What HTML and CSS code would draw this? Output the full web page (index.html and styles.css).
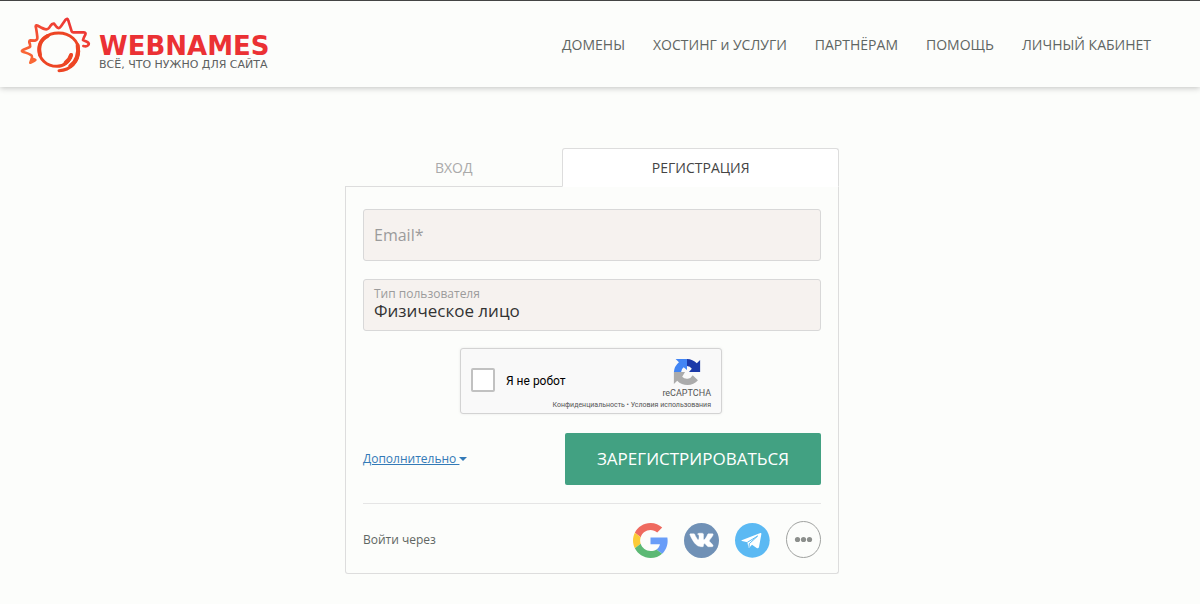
FILE: index.html
```
<!DOCTYPE html>
<html lang="ru">
<head>
  <meta charset="UTF-8" />
  <meta name="viewport" content="width=device-width, initial-scale=1.0" />
  <title>Регистрация - Webnames</title>
  <link rel="stylesheet" href="styles.css">
</head>
<body>

  <header class="header">
    <a href="#" class="logo">
      <svg class="logo-sun" viewBox="30 20 219 174" fill="none" stroke-linecap="round" stroke-linejoin="round">
        <defs>
          <linearGradient id="rays" x1="0" y1="1" x2="1" y2="0">
            <stop offset="0" stop-color="#fb6e35" />
            <stop offset="1" stop-color="#ea2b34" />
          </linearGradient>
        </defs>
        <path stroke="url(#rays)" stroke-width="8" d="M69 147 L79 152 Q76 155 64 160 Q71 142 68 139 Q62 133 43 128 Q34 125 43 121 L61 114 Q65 111 63 105 Q58 94 64 93 L78 94 Q86 93 85 83 Q82 58 80 52 Q80 45 88 50 Q105 60 112 60 Q119 60 124 50 Q129 42 135 43 L143 53 Q150 60 155 52 L169 32 Q176 24 178 34 L188 66 Q190 70 195 69 L223 69 Q232 69 229 76 Q223 87 222 92 L235 98 Q243 103 237 108 Q232 113 223 110" />
        <path stroke="#ed4524" stroke-width="9" d="M187 136 C182 158 164 171 144 171 C112 171 90 149 90 121 C90 93 114 71 149 71 C184 71 209 95 209 125 C209 157 185 182 150 184" />
        <path stroke="#ed4524" stroke-width="12" d="M186 137 C184 146 178 154 170 160 M206 108 C211 132 202 158 184 170 M93 136 C86 108 98 89 116 80" />
      </svg>
      <span class="logo-text">
        <span class="logo-name">WEBNAMES</span>
        <span class="logo-slogan">ВСЁ, ЧТО НУЖНО ДЛЯ САЙТА</span>
      </span>
    </a>
    <nav class="menu">
      <a href="#">ДОМЕНЫ</a>
      <a href="#">ХОСТИНГ и УСЛУГИ</a>
      <a href="#">ПАРТНЁРАМ</a>
      <a href="#">ПОМОЩЬ</a>
      <a href="#">ЛИЧНЫЙ КАБИНЕТ</a>
    </nav>
  </header>

  <main class="main">
    <div class="auth">
      <div class="tabs">
        <button type="button" class="tab">ВХОД</button>
        <button type="button" class="tab tab-active">РЕГИСТРАЦИЯ</button>
      </div>

      <form class="panel" action="#" method="post">
        <input class="field email" type="email" name="email" placeholder="Email*" aria-label="Email" />

        <div class="field field-select">
          <label for="usertype">Тип пользователя</label>
          <select id="usertype" name="usertype">
            <option>Физическое лицо</option>
            <option>Юридическое лицо</option>
          </select>
        </div>

        <div class="captcha">
          <input type="checkbox" id="robot">
          <label for="robot">Я не робот</label>
          <div class="captcha-brand">
            <svg viewBox="0 0 64 64" width="28" height="28">
              <path fill="#1c3aa9" d="M62 31.900V4.500l-7.600 7.600A32 32 0 0 0 32 2v16.500A14 14 0 0 1 43 24.400L36.500 31.900z" />
              <path fill="#4285f4" d="M32 2H6l7.600 7.600A32 32 0 0 0 2 32h16.500A14 14 0 0 1 24.400 21L32 27.500z" />
              <path fill="#ababab" d="M2 32v27.500l7.600-7.600A32 32 0 0 0 57 51L45 39.500A15 15 0 0 1 21 43l6.500-11z" />
            </svg>
            <span>reCAPTCHA</span>
          </div>
          <div class="captcha-links"><a href="#">Конфиденциальность</a> • <a href="#">Условия использования</a></div>
        </div>

        <div class="actions">
          <a href="#" class="more">Дополнительно <i class="caret"></i></a>
          <button type="submit" class="submit">ЗАРЕГИСТРИРОВАТЬСЯ</button>
        </div>

        <div class="social">
          <span>Войти через</span>
          <div class="social-list">
            <a href="#" aria-label="Google">
              <svg viewBox="0 0 48 48">
                <path fill="#ef6a5f" d="M24 9.5c3.54 0 6.71 1.22 9.21 3.6l6.85-6.85C35.9 2.38 30.47 0 24 0 14.62 0 6.51 5.38 2.56 13.22l7.98 6.19C12.43 13.72 17.74 9.5 24 9.5z" />
                <path fill="#699df8" d="M47.500 24.550c0-1.570-.15-3.090-.38-4.550H24v9.020h12.940c-.58 2.960-2.260 5.480-4.780 7.180l7.730 6c4.510-4.180 7.600-10.360 7.600-17.650z" />
                <path fill="#fbcb37" d="M10.53 28.59c-.48-1.45-.76-2.99-.76-4.59s.27-3.14.76-4.59l-7.98-6.19C.92 16.46 0 20.12 0 24c0 3.88.92 7.54 2.56 10.78l7.97-6.19z" />
                <path fill="#5cb974" d="M24 48c6.48 0 11.93-2.13 15.89-5.81l-7.73-6c-2.15 1.45-4.92 2.3-8.16 2.3-6.26 0-11.57-4.22-13.47-9.91l-7.98 6.19C6.51 42.62 14.62 48 24 48z" />
              </svg>
            </a>
            <a href="#" aria-label="VK">
              <svg viewBox="0 0 24 24">
                <circle cx="12" cy="12" r="12" fill="#7091b6" />
                <path fill="#fff" stroke="#fff" stroke-width=".3" d="M12.785 16.241s.288-.032.436-.194c.136-.148.132-.427.132-.427s-.02-1.304.576-1.496c.588-.19 1.341 1.26 2.14 1.818.605.422 1.064.33 1.064.33l2.137-.03s1.117-.071.587-.964c-.043-.073-.308-.661-1.588-1.87-1.34-1.264-1.16-1.059.453-3.246.983-1.332 1.376-2.145 1.253-2.493-.117-.332-.84-.244-.84-.244l-2.406.015s-.178-.025-.31.056c-.13.079-.212.262-.212.262s-.382 1.03-.89 1.907c-1.07 1.85-1.499 1.948-1.674 1.832-.407-.267-.305-1.075-.305-1.648 0-1.793.267-2.54-.521-2.733-.262-.065-.454-.107-1.123-.114-.858-.009-1.585.003-1.996.208-.274.136-.485.44-.356.457.159.022.519.099.71.363.246.341.237 1.107.237 1.107s.142 2.11-.33 2.371c-.325.18-.77-.187-1.725-1.865-.489-.859-.859-1.81-.859-1.81s-.07-.176-.198-.272c-.154-.115-.37-.151-.37-.151l-2.286.015s-.343.01-.469.161C3.94 7.721 4.043 8 4.043 8s1.79 4.258 3.817 6.403c1.858 1.967 3.968 1.838 3.968 1.838h.957z" />
              </svg>
            </a>
            <a href="#" aria-label="Telegram">
              <svg viewBox="0 0 105 105">
                <circle cx="52" cy="52" r="52" fill="#5bb9f3" />
                <path fill="#fff" d="M20 52 L76 30 Q80 29 79 34 L72 72 Q70 78 65 75 L51 65 L44 73 Q41 76 40 71 L37 58 L21 54 Q17 53 20 52z" />
                <path fill="none" stroke="#5bb9f3" stroke-width="3" d="M37 58 L68 39 L43 62 L42 72" />
              </svg>
            </a>
            <a href="#" aria-label="Ещё">
              <svg viewBox="0 0 35 37" class="dots" fill="#8c8f8c">
                <ellipse cx="17.500" cy="18.500" rx="17" ry="18" fill="none" stroke="#a0a2a0" />
                <circle cx="11.500" cy="18.500" r="2.600" />
                <circle cx="17.500" cy="18.500" r="2.600" />
                <circle cx="23.500" cy="18.500" r="2.600" />
              </svg>
            </a>
          </div>
        </div>
      </form>
    </div>
  </main>

</body>
</html>
```
FILE: styles.css
```
* {
  box-sizing: border-box;
}

body {
  margin: 0;
  background: #fcfdfb;
  color: #5f6663;
  font-family: 'Open Sans', 'Noto Sans', sans-serif;
  font-size: 12px;
}

button,
input,
select {
  font-family: inherit;
}

/* header */
.header {
  display: flex;
  align-items: center;
  justify-content: space-between;
  height: 87px;
  padding: 2px 49px 0 19px;
  border-top: 1px solid #444;
  box-shadow: 0 1px 6px rgba(0, 0, 0, 0.24);
}

.logo {
  display: flex;
  align-items: center;
  gap: 7px;
  text-decoration: none;
}

.logo-sun {
  width: 73px;
  height: 58px;
}

.logo-text {
  display: flex;
  flex-direction: column;
  padding-top: 16px;
  font-family: 'DejaVu Sans', sans-serif;
}

.logo-name {
  color: #eb3134;
  font-size: 26px;
  font-weight: bold;
  line-height: 24px;
}

.logo-slogan {
  color: #5d605f;
  font-size: 11px;
  line-height: 14px;
}

.menu {
  display: flex;
  gap: 28px;
}

.menu a {
  color: #5f6663;
  font-size: 14px;
  line-height: 20px;
  text-decoration: none;
}

/* login and registration box */
.main {
  padding: 61px 16px 29px 0;
}

.auth {
  width: 100%;
  max-width: 494px;
  margin: 0 auto;
}

.tabs {
  display: flex;
}

.tab {
  flex: 1;
  height: 39px;
  padding: 0;
  border: 0;
  border-bottom: 1px solid #ddd;
  background: none;
  color: #aaa;
  font-size: 14px;
  cursor: pointer;
}

.tab-active {
  flex: 0 0 56%;
  border: 1px solid #ddd;
  border-bottom-color: #fff;
  border-radius: 3px 3px 0 0;
  background: #fff;
  color: #444;
}

.panel {
  padding: 22px 17px 15px;
  border: 1px solid #ddd;
  border-top: 0;
  border-radius: 0 0 3px 3px;
}

.field {
  display: block;
  width: 100%;
  height: 52px;
  margin-bottom: 18px;
  padding: 0 10px;
  border: 1px solid #d8d8d8;
  border-radius: 3px;
  background: #f6f2ef;
}

.email {
  font-size: 16px;
}

.email::placeholder {
  color: #9b9b9b;
}

.field-select {
  margin-bottom: 17px;
  padding-top: 6px;
}

.field-select label {
  display: block;
  color: #9b9b9b;
  font-size: 12px;
  line-height: 16px;
}

.field-select select {
  display: block;
  width: 100%;
  height: 18px;
  padding: 0;
  border: 0;
  appearance: none;
  background: none;
  color: #333;
  font-size: 17px;
  line-height: 18px;
}

/* captcha */
.captcha {
  display: grid;
  grid-template-columns: 24px 1fr auto;
  grid-template-rows: 43px 10px;
  column-gap: 11px;
  align-items: center;
  width: 262px;
  height: 66px;
  margin: 0 auto 19px 97px;
  padding: 8px 10px 0;
  border: 1px solid #d3d3d3;
  border-radius: 3px;
  background: #f9f9f9;
  box-shadow: 0 0 3px rgba(0, 0, 0, 0.08);
  font-family: Roboto, sans-serif;
}

.captcha input {
  width: 24px;
  height: 24px;
  margin: 3px 0 0;
  border: 2px solid #c1c1c1;
  border-radius: 2px;
  appearance: none;
  background: #fff;
}

.captcha label {
  padding-top: 5px;
  color: #000;
  font-size: 12px;
}

.captcha-brand {
  display: flex;
  flex-direction: column;
  align-items: center;
  color: #555;
  font-size: 9px;
  line-height: 14px;
}

.captcha-links {
  grid-column: 1 / -1;
  color: #555;
  font-size: 7px;
  line-height: 10px;
  text-align: right;
}

.captcha-links a {
  color: #555;
  text-decoration: none;
}

.actions {
  display: flex;
  align-items: center;
  justify-content: space-between;
  padding-bottom: 18px;
  border-bottom: 1px solid #e5e5e5;
}

.more {
  padding-bottom: 2px;
  color: #337ab7;
}

.caret {
  display: inline-block;
  border: 4px solid transparent;
  border-top-color: #337ab7;
  border-bottom: 0;
  vertical-align: middle;
}

.submit {
  width: 256px;
  height: 52px;
  padding: 0 0 2px;
  border: 0;
  border-radius: 2px;
  background: #42a182;
  color: #fff;
  font-size: 17px;
  cursor: pointer;
}

.social {
  display: flex;
  align-items: center;
  justify-content: space-between;
  padding-top: 17px;
}

.social-list {
  display: flex;
  align-items: flex-end;
  gap: 16px;
}

.social-list svg {
  display: block;
  width: 35px;
  height: 35px;
}

.social-list .dots {
  height: 37px;
}
```
